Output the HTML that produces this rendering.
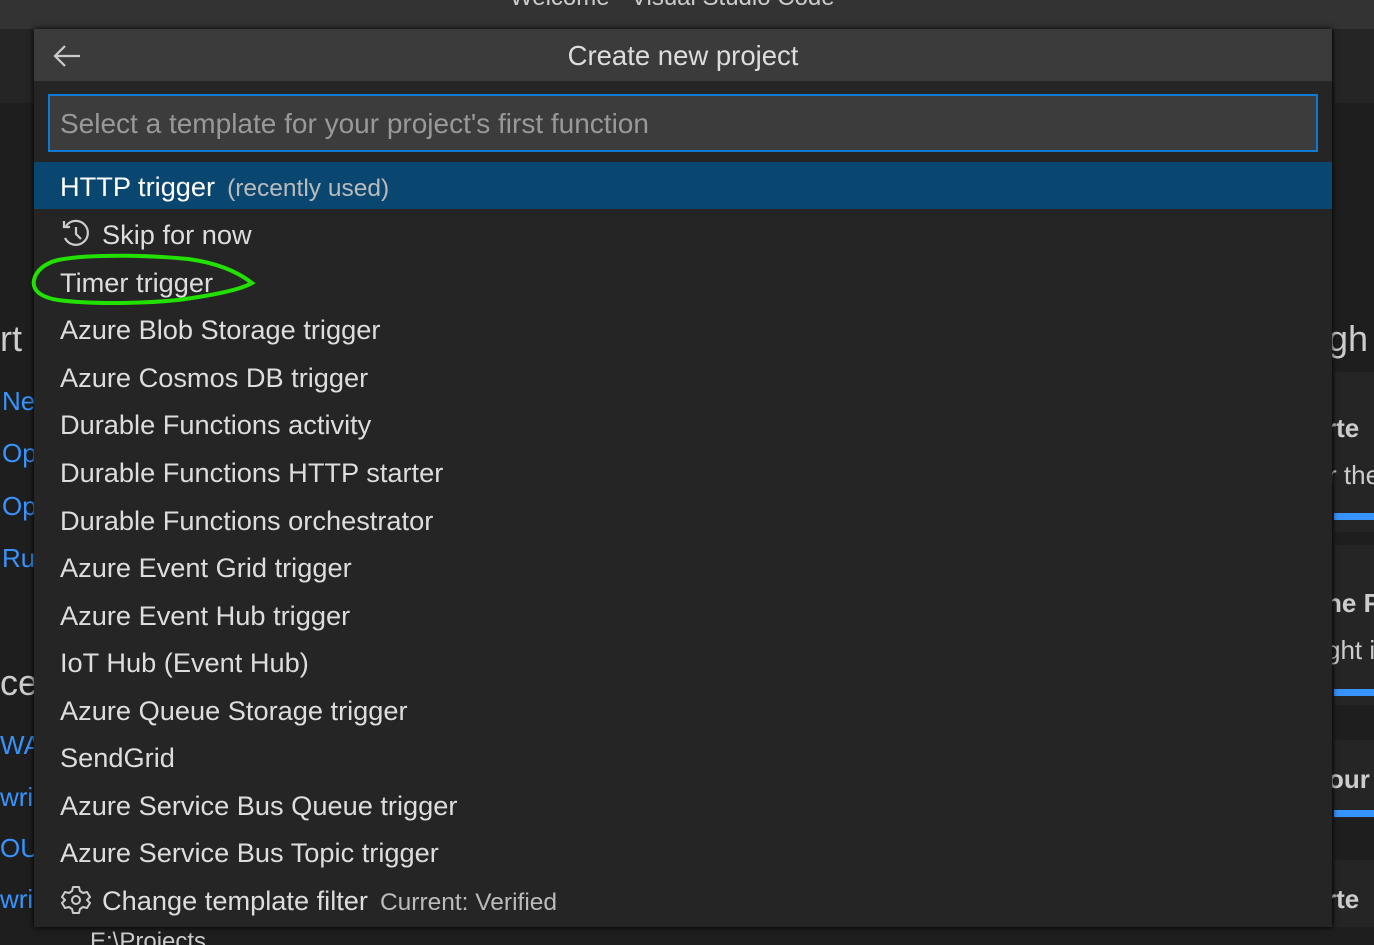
<!DOCTYPE html>
<html><head><meta charset="utf-8"><style>
*{margin:0;padding:0;box-sizing:border-box}
html,body{width:1374px;height:945px;overflow:hidden}
body{background:#1e1e1e;font-family:"Liberation Sans",sans-serif;position:relative}
.abs{position:absolute;white-space:nowrap}
.top{left:0;top:0;width:1374px;height:29px;background:#333}
.lb{left:0;top:29px;width:34px;height:74px;background:#252526}
.rb{left:1334px;top:29px;width:40px;height:74px;background:#252526}
.bl{color:#3794ff;font-size:26px}
.panel{left:34px;top:29px;width:1298px;height:898px;background:#252526;box-shadow:0 0 6px #000}
.hdr{left:0;top:0;width:1298px;height:52px;background:#3b3b3b}
.title{left:0;top:11px;width:1298px;text-align:center;color:#ddd;font-size:27.5px}
.inp{left:14px;top:65px;width:1270px;height:58px;border:2px solid #0e7ad3;background:#3c3c3c;color:#999;font-size:28px;padding:12px 0 0 10px}
.row{left:0;width:1298px;height:47px;color:#ddd;font-size:27.2px;padding:9px 0 0 26px}
.sel{background:#094771;color:#fff}
.d{color:#bbb;font-size:24.5px;margin-left:12px}
.card{left:1334px;width:40px;background:#252526}
.bar{left:1334px;width:40px;height:7px;background:#3794ff}
.rt{color:#ccc;font-size:26px;font-weight:bold}
</style></head><body>
<div class="abs top"></div>
<div class="abs" style="left:510px;top:-16px;color:#ccc;font-size:24px">Welcome - Visual Studio Code</div>
<div class="abs lb"></div><div class="abs rb"></div>
<div class="abs" style="left:0;top:318px;color:#ccc;font-size:36px">rt</div>
<div class="abs bl" style="left:2px;top:386px">Ne</div>
<div class="abs bl" style="left:2px;top:438px">Op</div>
<div class="abs bl" style="left:2px;top:491px">Op</div>
<div class="abs bl" style="left:2px;top:543px">Ru</div>
<div class="abs" style="left:0;top:662px;color:#ccc;font-size:36px">ce</div>
<div class="abs bl" style="left:0;top:730px">WA</div>
<div class="abs bl" style="left:0;top:782px">wri</div>
<div class="abs bl" style="left:0;top:833px">OU</div>
<div class="abs bl" style="left:0;top:884px">wri</div>
<div class="abs" style="left:90px;top:928px;color:#ccc;font-size:24px">E:\Projects</div>
<div class="abs card" style="top:372px;height:160px"></div>
<div class="abs card" style="top:545px;height:160px"></div>
<div class="abs card" style="top:740px;height:78px"></div>
<div class="abs card" style="top:860px;height:67px"></div>
<div class="abs bar" style="top:513px"></div>
<div class="abs bar" style="top:689px"></div>
<div class="abs bar" style="top:810px"></div>
<div class="abs" style="left:1328px;top:318px;color:#ccc;font-size:36px">gh</div>
<div class="abs rt" style="left:1326px;top:413px">rte</div>
<div class="abs" style="left:1328px;top:460px;color:#ccc;font-size:26px">r the</div>
<div class="abs rt" style="left:1326px;top:588px">ne F</div>
<div class="abs" style="left:1326px;top:635px;color:#ccc;font-size:26px">ght i</div>
<div class="abs rt" style="left:1328px;top:764px">our</div>
<div class="abs rt" style="left:1326px;top:884px">rte</div>

<div class="abs panel">
<div class="abs hdr"></div>
<svg class="abs" style="left:18px;top:14px" width="30" height="26" viewBox="0 0 30 26"><path d="M28 13H3M13 3L3 13l10 10" stroke="#ccc" stroke-width="2.2" fill="none"/></svg>
<div class="abs title">Create new project</div>
<div class="abs inp">Select a template for your project's first function</div>
<div class="abs row sel" style="top:133px">HTTP trigger<span class="d">(recently used)</span></div>
<div class="abs row" style="top:181px;padding-left:68px">Skip for now</div>
<svg class="abs" style="left:26px;top:188px" width="32" height="32" viewBox="0 0 32 32"><path d="M6 9A12 12 0 1 1 5 21" stroke="#ccc" stroke-width="2.2" fill="none"/><path d="M4 4v6h6" stroke="#ccc" stroke-width="2.2" fill="none"/><path d="M16 10v7l5 5" stroke="#ccc" stroke-width="2.2" fill="none"/></svg>
<div class="abs row" style="top:229px">Timer trigger</div>
<div class="abs row" style="top:276px">Azure Blob Storage trigger</div>
<div class="abs row" style="top:324px">Azure Cosmos DB trigger</div>
<div class="abs row" style="top:371px">Durable Functions activity</div>
<div class="abs row" style="top:419px">Durable Functions HTTP starter</div>
<div class="abs row" style="top:467px">Durable Functions orchestrator</div>
<div class="abs row" style="top:514px">Azure Event Grid trigger</div>
<div class="abs row" style="top:562px">Azure Event Hub trigger</div>
<div class="abs row" style="top:609px">IoT Hub (Event Hub)</div>
<div class="abs row" style="top:657px">Azure Queue Storage trigger</div>
<div class="abs row" style="top:704px">SendGrid</div>
<div class="abs row" style="top:752px">Azure Service Bus Queue trigger</div>
<div class="abs row" style="top:799px">Azure Service Bus Topic trigger</div>
<div class="abs row" style="top:847px;padding-left:68px">Change template filter<span class="d">Current: Verified</span></div>
<svg class="abs" style="left:26px;top:855px" width="32" height="32" viewBox="0 0 32 32"><path d="M13 3h6l1 4 3 2 4-1 3 5-3 3v0l3 3-3 5-4-1-3 2-1 4h-6l-1-4-3-2-4 1-3-5 3-3-3-3 3-5 4 1 3-2z" stroke="#ccc" stroke-width="2" fill="none" stroke-linejoin="round"/><circle cx="16" cy="16" r="4" stroke="#ccc" stroke-width="2" fill="none"/></svg>
</div>
<svg class="abs" style="left:28px;top:250px" width="232" height="60" viewBox="0 0 232 60"><path d="M30 10C60 4 120 5 160 9C190 13 210 22 224 33C212 40 180 46 150 50C110 54 60 54 30 50C12 47 4 40 6 30C8 20 18 13 30 10" stroke="#22e000" stroke-width="4" fill="none" stroke-linecap="round"/></svg>
</body></html>
